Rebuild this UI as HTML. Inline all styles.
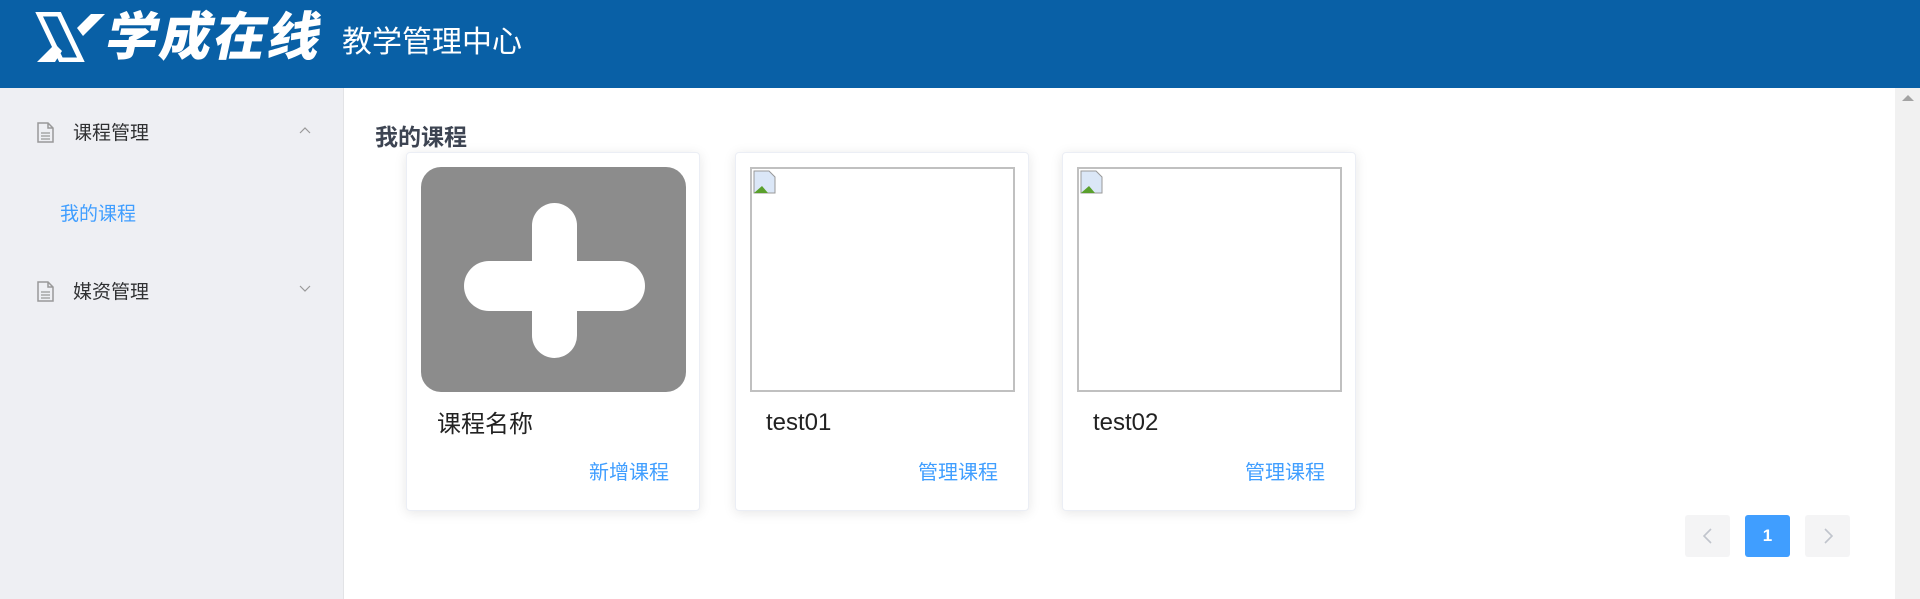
<!DOCTYPE html>
<html><head><meta charset="utf-8"><style>
*{margin:0;padding:0;box-sizing:border-box}
body{width:1920px;height:599px;overflow:hidden;background:#fff;font-family:"Liberation Sans","Noto Sans CJK SC",sans-serif;position:relative}
.hdr{position:absolute;left:0;top:0;width:1920px;height:88px;background:#0960a6}
.logo{position:absolute;left:107px;top:6px;color:#fff;font-size:52px;font-weight:900;letter-spacing:2px;transform:skewX(-12deg);line-height:64px}
.sub{position:absolute;left:342px;top:23px;color:#fff;font-size:30px;line-height:40px}
.side{position:absolute;left:0;top:88px;width:344px;height:511px;background:#eeeff3;border-right:1px solid #e2e3e6}
.mi{position:absolute;font-size:19px;color:#303133}
.ico{position:absolute;width:17px;height:21px}
.chev{position:absolute;width:12px;height:8px}
.ttl{position:absolute;left:375px;top:118px;font-size:23px;font-weight:bold;color:#3d4452}
.card{position:absolute;top:152px;width:294px;height:359px;background:#fff;border:1px solid #ebeef5;border-radius:4px;box-shadow:0 2px 12px rgba(0,0,0,.1)}
.img{position:absolute;left:14px;top:14px;width:265px;height:225px}
.name{position:absolute;left:30px;top:256px;font-size:24px;color:#222}
.lnk{position:absolute;right:30px;top:303px;font-size:20px;color:#409eff}
.pg{position:absolute;top:515px;width:45px;height:42px;border-radius:3px;background:#f4f4f5;color:#c0c4cc;font-size:18px;text-align:center;line-height:42px}
.sb{position:absolute;left:1895px;top:88px;width:25px;height:511px;background:#f1f1f1}
</style></head><body>
<div class="hdr">
<svg style="position:absolute;left:35px;top:12px" width="72" height="50" viewBox="0 0 72 50"><path d="M4 2h20l22 46H26z" fill="none" stroke="#fff" stroke-width="5"/><path d="M56 2h14L48 24l-6-8z" fill="#fff"/><path d="M20 32l7 7-7 11H2z" fill="#fff"/></svg>
<div class="logo">学成在线</div>
<div class="sub">教学管理中心</div>
</div>
<div class="side">
<svg class="ico" style="left:37px;top:34px" viewBox="0 0 17 21"><path d="M1 1h10l5 5v14H1z M11 1v5h5" fill="none" stroke="#999" stroke-width="1.5"/><path d="M4 11h9M4 14h9M4 17h9" stroke="#999" stroke-width="1.3"/></svg>
<div class="mi" style="left:73px;top:30px">课程管理</div>
<svg class="chev" style="left:299px;top:38px" viewBox="0 0 12 8"><path d="M1 7l5-5 5 5" fill="none" stroke="#999" stroke-width="1.2"/></svg>
<div class="mi" style="left:60px;top:111px;color:#409eff">我的课程</div>
<svg class="ico" style="left:37px;top:193px" viewBox="0 0 17 21"><path d="M1 1h10l5 5v14H1z M11 1v5h5" fill="none" stroke="#999" stroke-width="1.5"/><path d="M4 11h9M4 14h9M4 17h9" stroke="#999" stroke-width="1.3"/></svg>
<div class="mi" style="left:73px;top:189px">媒资管理</div>
<svg class="chev" style="left:299px;top:197px" viewBox="0 0 12 8"><path d="M1 1l5 5 5-5" fill="none" stroke="#999" stroke-width="1.2"/></svg>
</div>
<div class="ttl">我的课程</div>
<div class="card" style="left:406px">
<div class="img" style="background:#8c8c8c;border-radius:20px">
<div style="position:absolute;left:111px;top:36px;width:45px;height:155px;background:#fff;border-radius:23px"></div>
<div style="position:absolute;left:43px;top:94px;width:181px;height:50px;background:#fff;border-radius:25px"></div>
</div>
<div class="name" style="top:251px">课程名称</div><div class="lnk">新增课程</div>
</div>
<div class="card" style="left:735px">
<div class="img" style="border:2px solid #c0c0c0"><svg style="position:absolute;left:1px;top:1px" width="24" height="24" viewBox="0 0 24 24"><path d="M1 1h15l6 6v16H1z" fill="#dbe7f7" stroke="#999"/><path d="M1 23l8-7 6 7z" fill="#5aa02c"/></svg></div>
<div class="name">test01</div><div class="lnk">管理课程</div>
</div>
<div class="card" style="left:1062px">
<div class="img" style="border:2px solid #c0c0c0"><svg style="position:absolute;left:1px;top:1px" width="24" height="24" viewBox="0 0 24 24"><path d="M1 1h15l6 6v16H1z" fill="#dbe7f7" stroke="#999"/><path d="M1 23l8-7 6 7z" fill="#5aa02c"/></svg></div>
<div class="name">test02</div><div class="lnk">管理课程</div>
</div>
<div class="pg" style="left:1685px"><svg width="12" height="16" viewBox="0 0 12 16" style="margin-top:13px"><path d="M9 1L2 8l7 7" fill="none" stroke="#c0c4cc" stroke-width="1.6"/></svg></div>
<div class="pg" style="left:1745px;background:#409eff;color:#fff;font-weight:bold;font-size:17px">1</div>
<div class="pg" style="left:1805px"><svg width="12" height="16" viewBox="0 0 12 16" style="margin-top:13px"><path d="M3 1l7 7-7 7" fill="none" stroke="#c0c4cc" stroke-width="1.6"/></svg></div>
<div class="sb"><div style="position:absolute;left:7px;top:7px;width:0;height:0;border-left:6px solid transparent;border-right:6px solid transparent;border-bottom:6px solid #a3a3a3"></div></div>
</body></html>
